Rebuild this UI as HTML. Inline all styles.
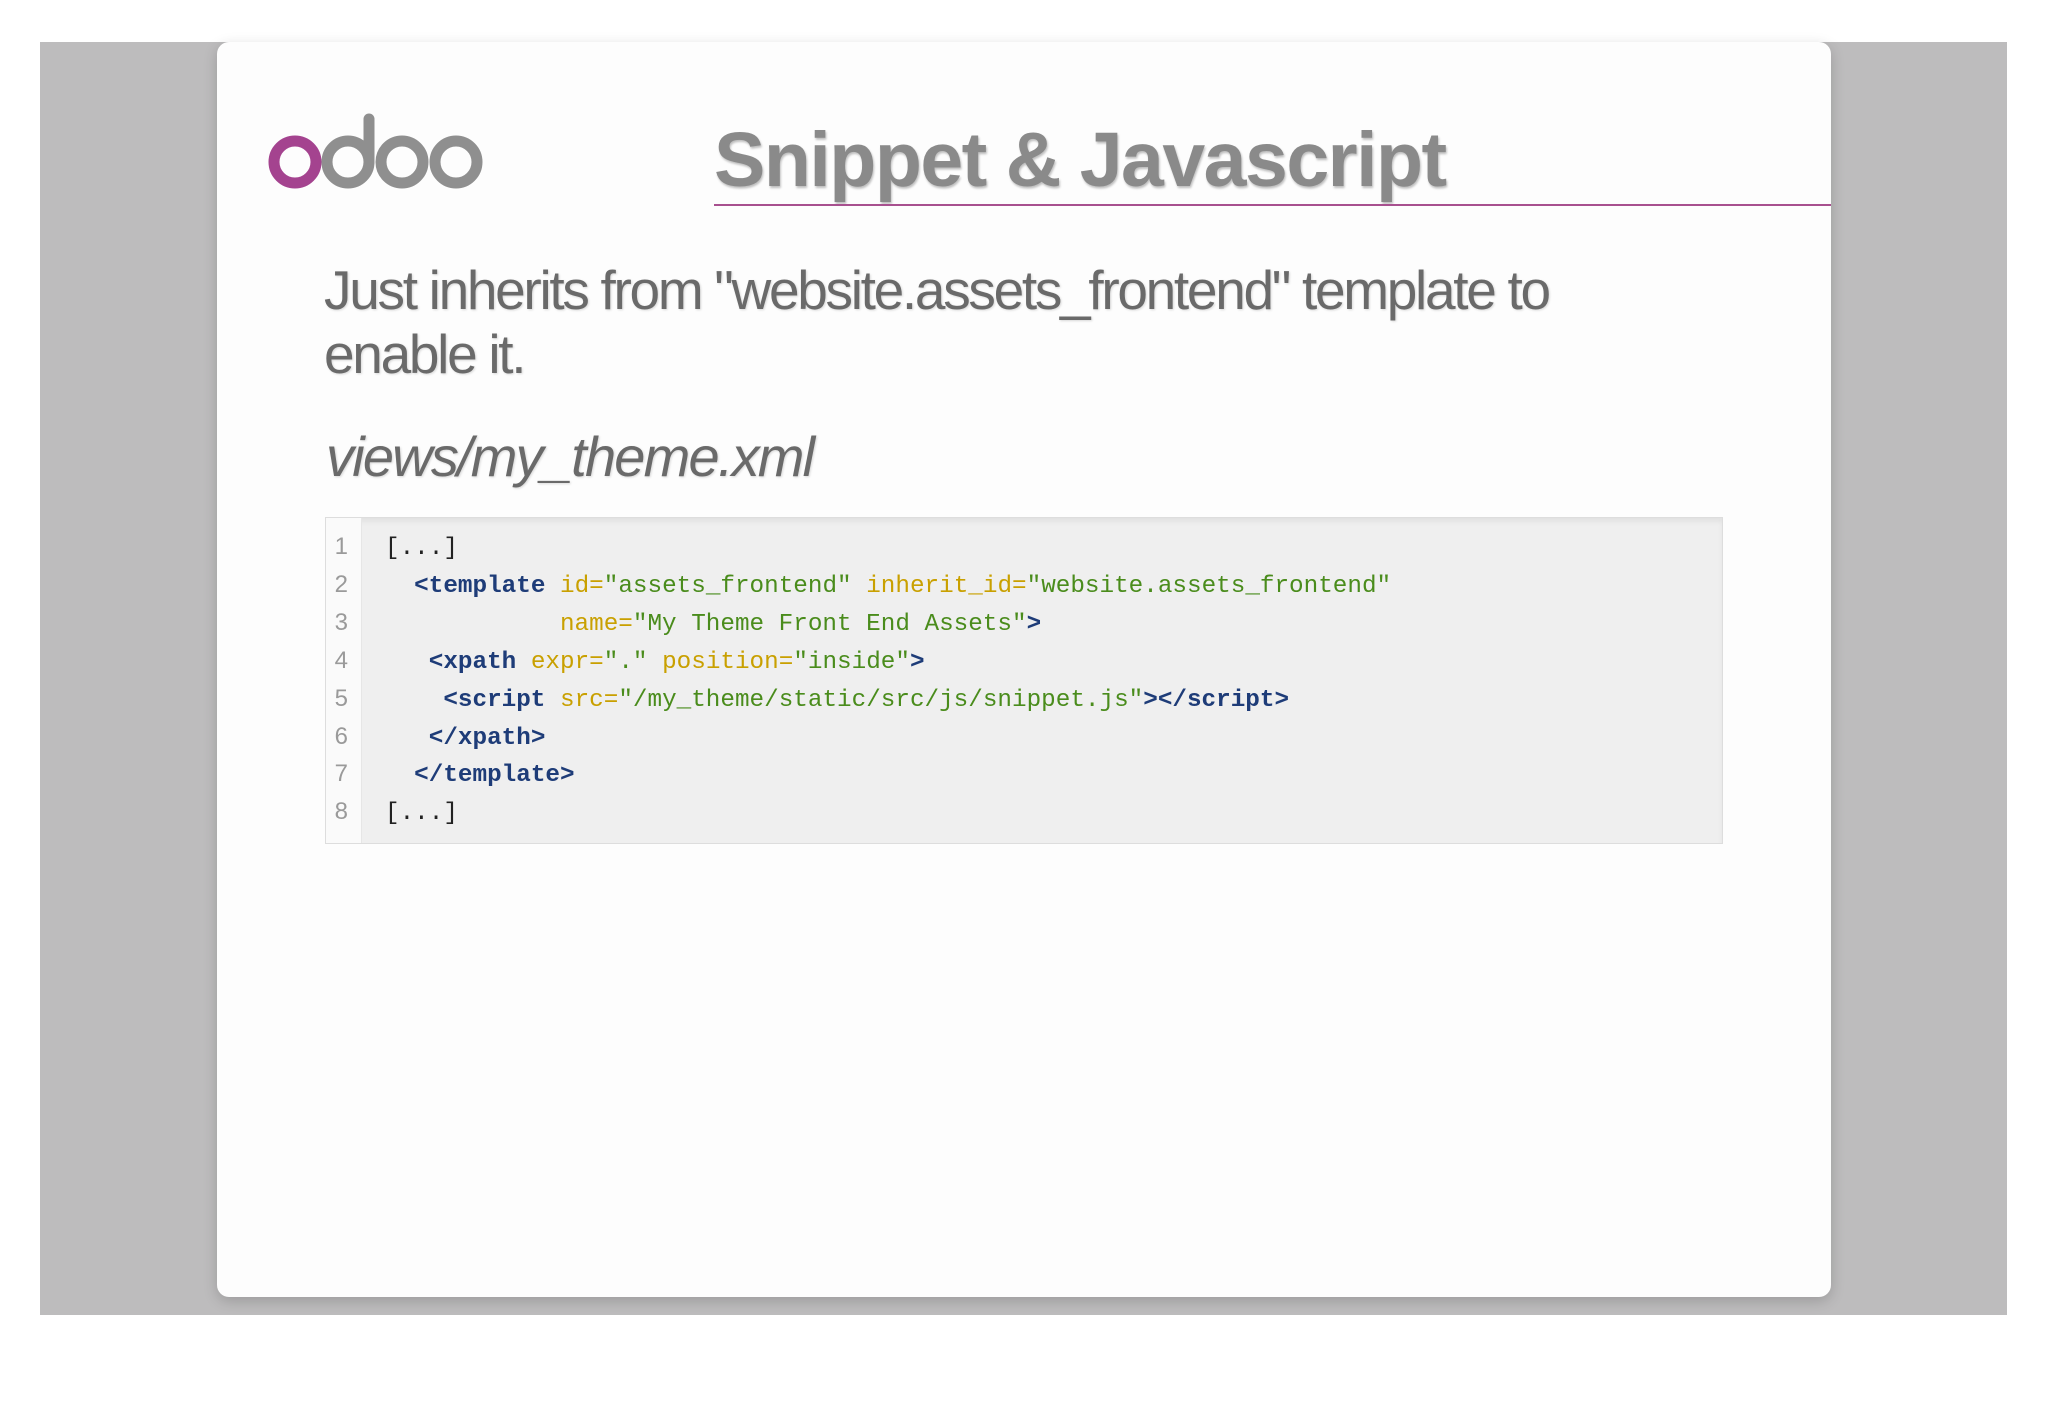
<!DOCTYPE html>
<html><head><meta charset="utf-8"><style>
html,body{margin:0;padding:0;width:2048px;height:1408px;background:#fff;overflow:hidden}
.bg{position:absolute;left:40px;top:42px;width:1967px;height:1273px;background:#bdbcbd}
.card{position:absolute;left:217px;top:42px;width:1614px;height:1255px;background:#fdfdfd;border-radius:12px;box-shadow:0 4px 14px rgba(0,0,0,.18)}
.title{position:absolute;left:714px;top:116px;font:700 77px "Liberation Sans",sans-serif;color:#8a8a8a;letter-spacing:-1.5px;text-shadow:1px 2px 2px rgba(0,0,0,.25);white-space:nowrap}
.rule{position:absolute;left:714px;top:204px;width:1117px;height:2px;background:#a8508f}
.body{position:absolute;left:324px;top:258px;width:1500px;font:400 55px/64px "Liberation Sans",sans-serif;color:#6a6a6a;letter-spacing:-2.3px;text-shadow:1px 1px 2px rgba(0,0,0,.15);white-space:nowrap}
.file{position:absolute;left:326px;top:424px;font:italic 400 56px "Liberation Sans",sans-serif;color:#6a6a6a;letter-spacing:-1.8px;text-shadow:1px 1px 2px rgba(0,0,0,.15)}
.code{position:absolute;left:325px;top:517px;width:1396px;height:325px;background:#efefef;border:1px solid #ddd;box-shadow:inset 0 4px 4px #e2e2e2}
.gut{position:absolute;left:0;top:0;width:35px;height:100%;background:#fafafa;border-right:1px solid #e6e6e6}
.ln{position:absolute;left:0;top:10px;width:22px;text-align:right;font:400 24px/37.9px "Liberation Sans",sans-serif;color:#9a9a9a}
pre{position:absolute;left:59px;top:12px;margin:0;font:400 24.3px/37.9px "Liberation Mono",monospace;color:#222}
.t{color:#1e3c78;font-weight:700}.a{color:#c9a000}.v{color:#4a8c1c}
</style></head><body>
<div class="bg"></div>
<div class="card"></div>
<svg style="position:absolute;left:266px;top:112px" width="224" height="80" viewBox="0 0 224 80">
<circle cx="29" cy="50" r="21" fill="none" stroke="#a4438f" stroke-width="11"/>
<circle cx="82" cy="50" r="21" fill="none" stroke="#8f8f8f" stroke-width="11"/>
<line x1="103" y1="7" x2="103" y2="50" stroke="#8f8f8f" stroke-width="11" stroke-linecap="round"/>
<circle cx="136" cy="50" r="21" fill="none" stroke="#8f8f8f" stroke-width="11"/>
<circle cx="190" cy="50" r="21" fill="none" stroke="#8f8f8f" stroke-width="11"/>
</svg>
<div class="title">Snippet &amp; Javascript</div>
<div class="rule"></div>
<div class="body">Just inherits from "website.assets_frontend" template to<br>enable it.</div>
<div class="file">views/my_theme.xml</div>
<div class="code"><div class="gut"><div class="ln">1<br>2<br>3<br>4<br>5<br>6<br>7<br>8</div></div>
<pre>[...]
  <span class="t">&lt;template</span> <span class="a">id=</span><span class="v">"assets_frontend"</span> <span class="a">inherit_id=</span><span class="v">"website.assets_frontend"</span>
            <span class="a">name=</span><span class="v">"My Theme Front End Assets"</span><span class="t">&gt;</span>
   <span class="t">&lt;xpath</span> <span class="a">expr=</span><span class="v">"."</span> <span class="a">position=</span><span class="v">"inside"</span><span class="t">&gt;</span>
    <span class="t">&lt;script</span> <span class="a">src=</span><span class="v">"/my_theme/static/src/js/snippet.js"</span><span class="t">&gt;&lt;/script&gt;</span>
   <span class="t">&lt;/xpath&gt;</span>
  <span class="t">&lt;/template&gt;</span>
[...]</pre></div>
</body></html>
